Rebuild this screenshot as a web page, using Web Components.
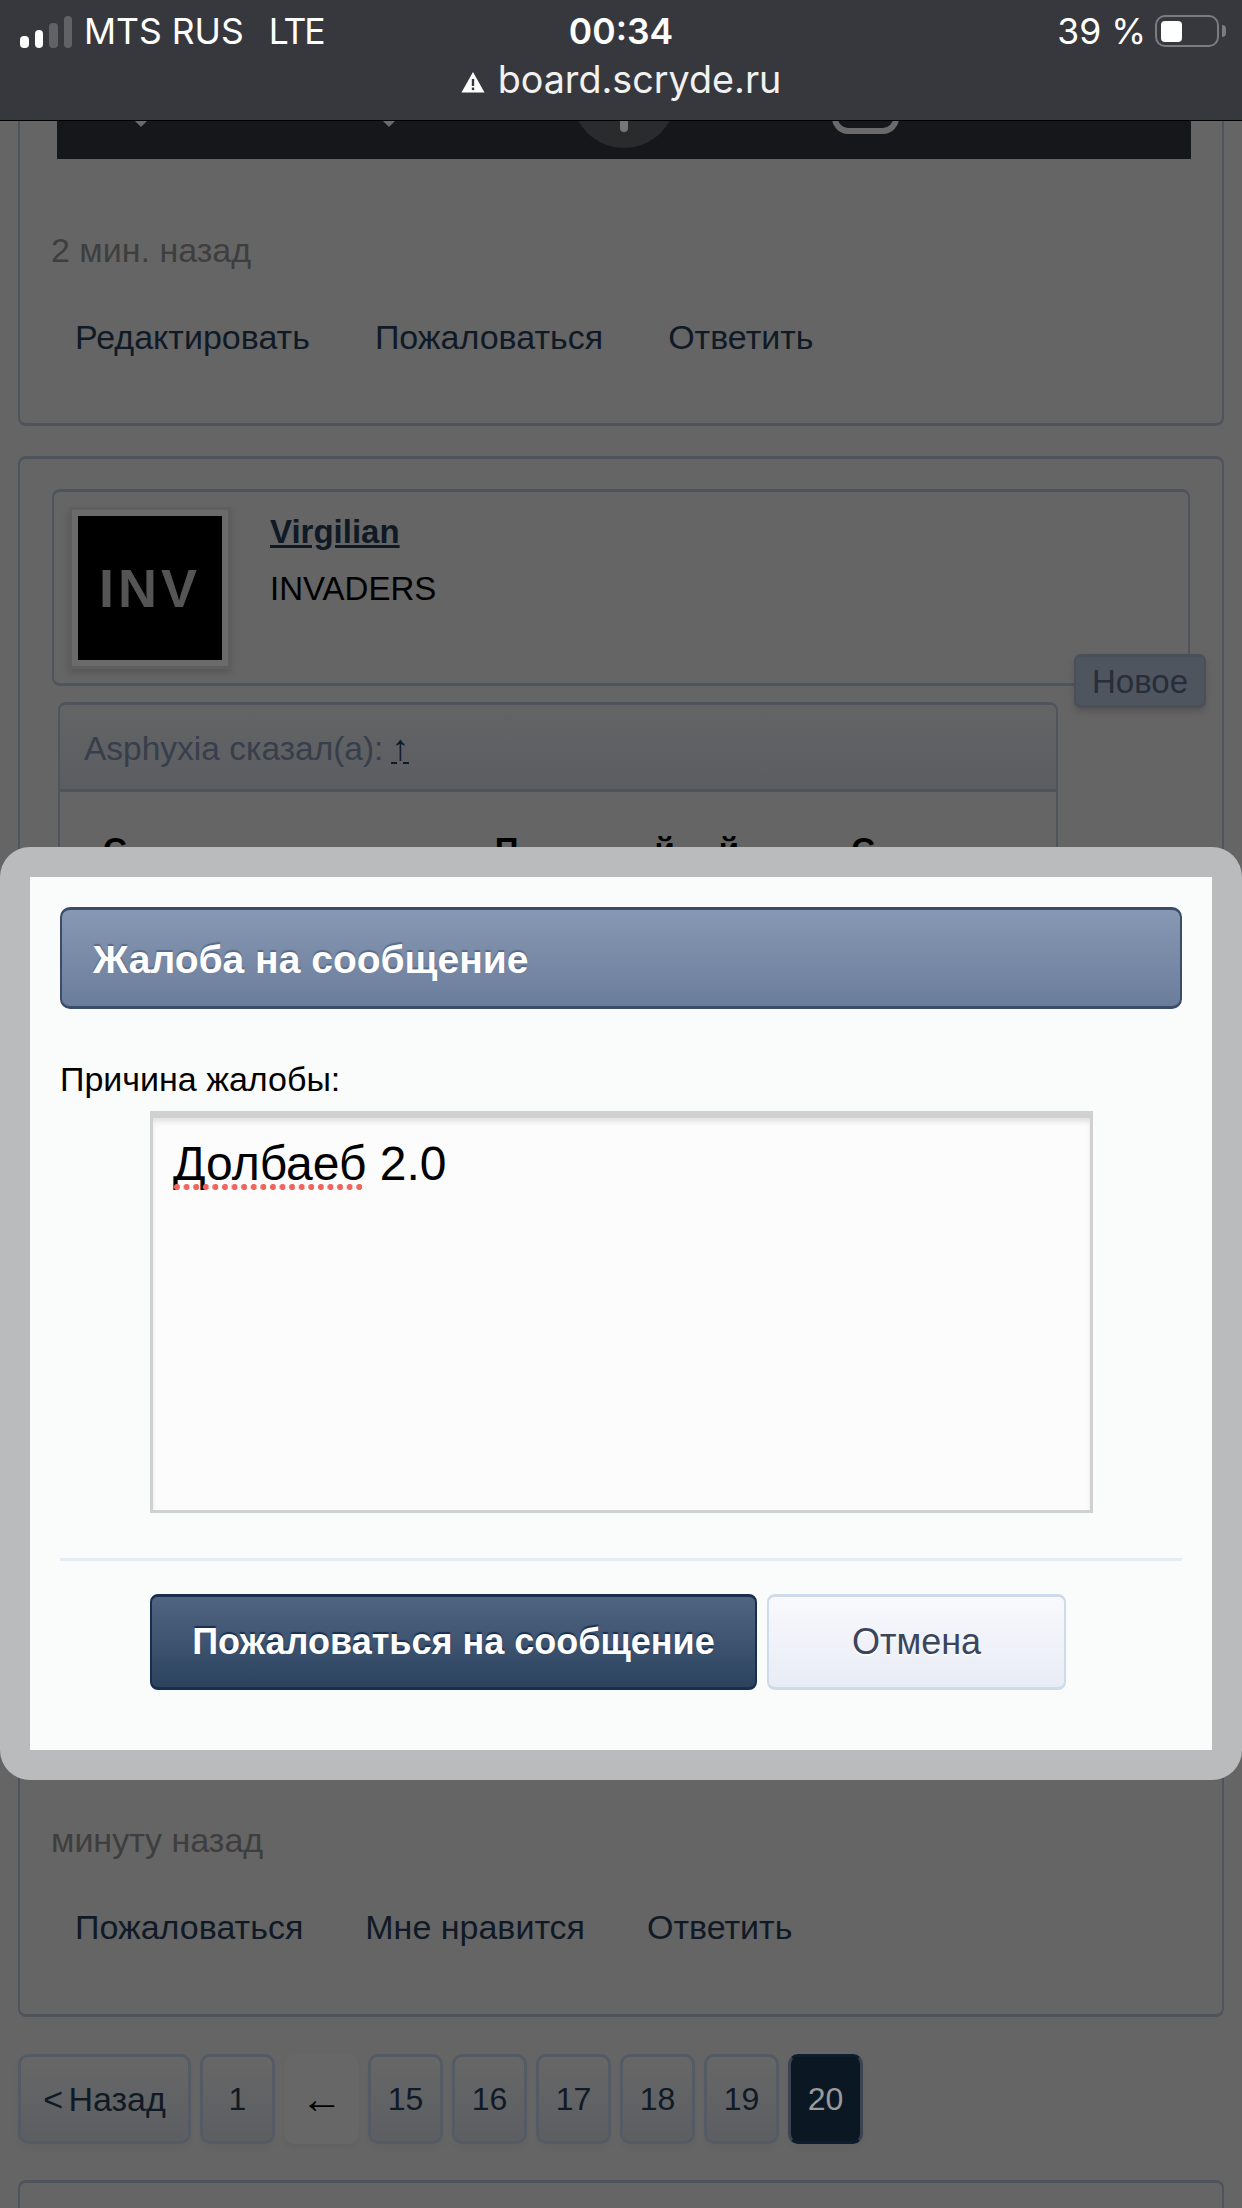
<!DOCTYPE html>
<html lang="ru">
<head>
<meta charset="utf-8">
<title>board.scryde.ru</title>
<style>
  html, body { margin: 0; padding: 0; }
  body {
    width: 1242px; height: 2208px; overflow: hidden; position: relative;
    background: #656565; color: #000;
    font: 32px "Liberation Sans", Arial, sans-serif;
    display: flex; flex-direction: column;
  }
  .bottom-line { height: 1px; background: #000; flex: none; }
</style>
</head>
<body>
  <status-bar carrier="MTS RUS" net="LTE" time="00:34" battery="39 %" url="board.scryde.ru"></status-bar>

  <forum-post cut>
    <video-strip></video-strip>
    <post-footer time="2 мин. назад" style="--link-gap:65px">
      <post-link>Редактировать</post-link>
      <post-link>Пожаловаться</post-link>
      <post-link>Ответить</post-link>
    </post-footer>
  </forum-post>

  <forum-post style="margin-top:30px">
    <user-card name="Virgilian" group="INVADERS"></user-card>
    <post-badge>Новое</post-badge>
    <post-quote author="Asphyxia сказал(а):"></post-quote>
    <post-footer time="минуту назад" style="margin-top:120px;--link-gap:62px">
      <post-link>Пожаловаться</post-link>
      <post-link>Мне нравится</post-link>
      <post-link>Ответить</post-link>
    </post-footer>
  </forum-post>

  <page-nav>
    <page-btn wide>&lt; Назад</page-btn>
    <page-btn>1</page-btn>
    <page-btn gap>←</page-btn>
    <page-btn>15</page-btn>
    <page-btn>16</page-btn>
    <page-btn>17</page-btn>
    <page-btn>18</page-btn>
    <page-btn>19</page-btn>
    <page-btn active>20</page-btn>
  </page-nav>

  <forum-post stub></forum-post>
  <div class="bottom-line"></div>

  <report-dialog title-text="Жалоба на сообщение" label="Причина жалобы:">
    <spell-word>Долбаеб</spell-word> 2.0
  </report-dialog>

<script>
// barra de estado + url
class StatusBar extends HTMLElement {
  constructor() {
    super();
    this.attachShadow({ mode: "open" });
  }
  connectedCallback() {
    const a = n => this.getAttribute(n);
    this.shadowRoot.innerHTML = `
      <style>
        :host { display: block; flex: none; height: 120px; border-bottom: 1px solid #000; background: #36383d;
                color: #fff; font-family: Inter, "Liberation Sans", sans-serif; position: relative; z-index: 2; }
        .top { height: 62px; display: grid; grid-template-columns: 1fr auto 1fr; align-items: center; font-size: 35.5px; }
        .left { display: flex; align-items: center; padding-left: 20px; }
        .bars { display: flex; align-items: flex-end; gap: 6px; height: 32px; margin-top: 2px; margin-right: 12px; }
        .bars i { width: 8.5px; border-radius: 4px; background: #fff; display: block; }
        .bars i.off { background: #606266; }
        .net { margin-left: 25px; letter-spacing: -2px; }
        .clock { font-weight: 600; }
        .right { display: flex; align-items: center; justify-content: flex-end; padding-right: 23px; }
        .batt { width: 53px; height: 21px; border: 2.5px solid #7b7c80; border-radius: 10px; margin-left: 9px; padding: 3.5px; position: relative; }
        .batt b { display: block; width: 21px; height: 21px; background: #fff; border-radius: 4px; }
        .batt::after { content: ""; position: absolute; right: -9px; top: 8px; width: 4px; height: 12px; background: #7b7c80; border-radius: 0 4px 4px 0; }
        .url { display: flex; justify-content: center; align-items: center; font-size: 37.7px; color: #f1f1f2; margin-top: -6px; height: 46px; }
        .url svg { margin-right: 13px; margin-top: 6px; }
      </style>
      <div class="top">
        <div class="left">
          <div class="bars"><i style="height:12px"></i><i style="height:18px"></i><i class="off" style="height:25px"></i><i class="off" style="height:32px"></i></div>
          <span>${a("carrier")}</span><span class="net">${a("net")}</span>
        </div>
        <div class="clock">${a("time")}</div>
        <div class="right"><span>${a("battery")}</span><div class="batt"><b></b></div></div>
      </div>
      <div class="url">
        <svg width="24" height="22" viewBox="0 0 24 22"><path d="M12 1 L23.5 21.5 H0.5 Z" fill="#fff"/><rect x="10.8" y="8" width="2.4" height="7" fill="#36383d"/><rect x="10.8" y="16.5" width="2.4" height="2.6" fill="#36383d"/></svg>
        <span>${a("url")}</span>
      </div>`;
  }
}

// tarjeta de un mensaje
class ForumPost extends HTMLElement {
  constructor() {
    super();
    this.attachShadow({ mode: "open" });
    this.shadowRoot.innerHTML = `
      <style>
        :host { display: block; flex: none; margin: 0 18px; box-sizing: border-box; position: relative;
                border: 2px solid #4f545c; border-top-width: 3px; border-bottom-width: 3px; border-radius: 8px; padding: 30px 0 67px; }
        :host([cut]) { border-top: 0; border-radius: 0 0 8px 8px; padding: 0 0 66px; }
        :host([stub]) { margin-top: 36px; height: 29px; padding: 0; border-bottom: 0; border-radius: 8px 8px 0 0; }
      </style>
      <slot></slot>`;
  }
}

// lo que queda visible del video del mensaje anterior
class VideoStrip extends HTMLElement {
  constructor() {
    super();
    this.attachShadow({ mode: "open" });
    this.shadowRoot.innerHTML = `
      <style>
        :host { display: block; height: 38px; margin: 0 31px 0 37px; background: #15171a; overflow: hidden; }
        svg { display: block; }
      </style>
      <svg width="1134" height="38" viewBox="0 0 1134 38">
        <path d="M78 0 H90 L84 6 Z" fill="#6a6a6a"/>
        <path d="M326 0 H338 L332 6 Z" fill="#6a6a6a"/>
        <circle cx="567" cy="-25" r="52" fill="#2a2b2d"/>
        <rect x="563" y="-20" width="8" height="31" rx="4" fill="#777"/>
        <rect x="778" y="-40" width="61" height="50" rx="13" fill="none" stroke="#6a6a6a" stroke-width="6"/>
      </svg>`;
  }
}

class PostFooter extends HTMLElement {
  constructor() {
    super();
    this.attachShadow({ mode: "open" });
  }
  connectedCallback() {
    this.shadowRoot.innerHTML = `
      <style>
        :host { display: block; margin-top: 71px; padding-left: 31px; }
        .time { height: 40px; line-height: 40px; color: #3e3e3e; font-size: 34px; }
        .links { display: flex; gap: var(--link-gap, 64px); margin: 47px 0 0 24px; }
      </style>
      <div class="time">${this.getAttribute("time")}</div>
      <div class="links"><slot></slot></div>`;
  }
}

class PostLink extends HTMLElement {
  constructor() {
    super();
    this.attachShadow({ mode: "open" });
    this.shadowRoot.innerHTML = `
      <style>
        :host { display: block; height: 40px; line-height: 40px; color: #101a26; font-size: 34px; white-space: nowrap; }
      </style>
      <slot></slot>`;
  }
}

class UserCard extends HTMLElement {
  constructor() {
    super();
    this.attachShadow({ mode: "open" });
  }
  connectedCallback() {
    this.shadowRoot.innerHTML = `
      <style>
        :host { display: flex; height: 197px; box-sizing: border-box; margin: 0 32px; padding: 15px 0 0 15px;
                border: 2px solid #4f545c; border-top-width: 3px; border-bottom-width: 3px; border-radius: 8px; }
        .frame { width: 162px; height: 162px; box-sizing: border-box; border: 3px solid #5e5e5e; background: #6b6b6b; padding: 6px;
                 box-shadow: 0 4px 7px rgba(0,0,0,.14); flex: none; }
        .pic { width: 144px; height: 144px; background: #000; display: flex; align-items: center; justify-content: center; }
        .logo { color: #555; font-size: 54px; letter-spacing: 4px; line-height: 1; filter: blur(.6px); font-weight: 700; }
        .info { margin-left: 39px; padding-top: 5px; }
        .name { color: #101a26; font-weight: 700; text-decoration: underline; height: 40px; line-height: 40px; font-size: 33px; }
        .group { margin-top: 17px; height: 40px; line-height: 40px; color: #000; font-size: 33px; }
      </style>
      <div class="frame"><div class="pic"><span class="logo">INV</span></div></div>
      <div class="info">
        <div class="name">${this.getAttribute("name")}</div>
        <div class="group">${this.getAttribute("group")}</div>
      </div>`;
  }
}

class PostBadge extends HTMLElement {
  constructor() {
    super();
    this.attachShadow({ mode: "open" });
    this.shadowRoot.innerHTML = `
      <style>
        :host { position: absolute; left: 1054px; top: 195px; width: 132px; height: 54px; box-sizing: border-box; padding-top: 2px;
                display: flex; align-items: center; justify-content: center;
                background: #4f555e; border: 2px solid #4a5058; border-top-width: 3px; border-bottom-width: 3px; border-radius: 7px;
                color: #272d39; font-size: 33px; box-shadow: 0 4px 6px rgba(0,0,0,.15); }
      </style>
      <slot></slot>`;
  }
}

class PostQuote extends HTMLElement {
  constructor() {
    super();
    this.attachShadow({ mode: "open" });
  }
  connectedCallback() {
    this.shadowRoot.innerHTML = `
      <style>
        :host { display: block; box-sizing: border-box; height: 998px; margin: 16px 164px 0 38px;
                border: 2px solid #4f545c; border-top-width: 3px; border-radius: 8px 8px 0 0; border-bottom-width: 3px; }
        .head { height: 87px; box-sizing: border-box; padding: 3px 24px 0; display: flex; align-items: center; gap: 8px;
                background: linear-gradient(#636465, #5b5d61); border-bottom: 3px solid #4f545c; border-radius: 6px 6px 0 0;
                color: #373e4c; font-size: 33.5px; }
        .up { color: #101a26; border-bottom: 2px dashed #101a26; line-height: 28px; font-size: 36px; }
        .body { padding: 38px 0 0 43px; font-weight: 700; font-size: 33px; line-height: 40px; white-space: pre; }
      </style>
      <div class="head"><span>${this.getAttribute("author")}</span><span class="up">↑</span></div>
      <div class="body"><span>С</span><span style="margin-left:368px">П</span><span style="margin-left:136px">й</span><span style="margin-left:44px">й</span><span style="margin-left:112px">С</span></div>`;
  }
}

class PageNav extends HTMLElement {
  constructor() {
    super();
    this.attachShadow({ mode: "open" });
    this.shadowRoot.innerHTML = `
      <style>
        :host { display: flex; flex: none; gap: 9px; margin: 37px 18px 0; height: 90px; }
      </style>
      <slot></slot>`;
  }
}

class PageBtn extends HTMLElement {
  constructor() {
    super();
    this.attachShadow({ mode: "open" });
    this.shadowRoot.innerHTML = `
      <style>
        :host { display: flex; align-items: center; justify-content: center; box-sizing: border-box; width: 75px; height: 90px;
                border: 3px solid #555b64; border-radius: 10px; background: linear-gradient(#676767, #5c5e62);
                color: #101a26; font-size: 32px; white-space: nowrap; box-shadow: 0 4px 6px rgba(0,0,0,.03); }
        :host([wide]) { width: 173px; font-size: 34px; word-spacing: -4px; }
        :host([gap]) { border-color: #676767; background: #676767; color: #000; font-size: 42px; box-shadow: 0 3px 5px rgba(0,0,0,.04); }
        :host([active]) { background: #0b1824; border-color: #3a434f; border-top-color: #0e1c2f; border-bottom-color: #0e1c2f; color: #9a9a9a; }
      </style>
      <slot></slot>`;
  }
}

// palabra con el subrayado rojo del corrector
class SpellWord extends HTMLElement {
  constructor() {
    super();
    this.attachShadow({ mode: "open" });
    this.shadowRoot.innerHTML = `
      <style>
        :host { display: inline-block; position: relative; }
        :host::after { content: ""; position: absolute; left: 1px; right: 0; bottom: 2px; height: 6px;
                       background: radial-gradient(circle at 3px 3px, #f0665f 2.8px, transparent 3.2px) 0 0 / 9.6px 6px repeat-x; }
      </style>
      <slot></slot>`;
  }
}

class ReportDialog extends HTMLElement {
  constructor() {
    super();
    this.attachShadow({ mode: "open" });
  }
  connectedCallback() {
    this.shadowRoot.innerHTML = `
      <style>
        :host { position: absolute; left: 0; top: 847px; width: 1242px; height: 933px; box-sizing: border-box;
                padding: 30px; background: #babbbd; border-radius: 30px; z-index: 3; }
        .inner { height: 100%; box-sizing: border-box; background: #fafcfb; padding: 30px; display: flex; flex-direction: column; }
        .title { flex: none; height: 102px; box-sizing: border-box; padding: 3px 0 0 31px; display: flex; align-items: center;
                 border: 2px solid #3a4c68; border-top-width: 3px; border-bottom-width: 3px; border-radius: 10px;
                 background: linear-gradient(#8798b3, #6a7d9b); color: #fff; font-weight: 700; font-size: 39px;
                 text-shadow: 0 -2px 1px rgba(60,76,104,.55); }
        .label { margin-top: 50px; height: 52px; line-height: 40px; font-size: 34px; }
        .field { align-self: flex-start; margin: 0 0 0 90px; width: 943px; height: 402px; box-sizing: border-box;
                 border: 3px solid #d0d0d0; border-top-width: 7px; background: #fcfcfc; padding: 18px 20px 0 20px;
                 font-size: 48px; line-height: 56px; box-shadow: inset 0 5px 6px -2px #dcdcdc; }
        .rule { height: 3px; background: #e6ebf4; margin-top: 45px; flex: none; }
        .actions { display: flex; gap: 10px; margin: 33px 0 0 90px; }
        .btn { height: 96px; box-sizing: border-box; display: flex; align-items: center; justify-content: center; border-radius: 8px;
               border: 2px solid; border-top-width: 3px; border-bottom-width: 3px; font-size: 36px; white-space: nowrap; }
        .send { width: 607px; background: linear-gradient(#516582, #2b435f); border-color: #1a2f4d; color: #fff; font-weight: 700;
                text-shadow: 0 -2px 1px #1a2f4d; }
        .cancel { width: 299px; background: linear-gradient(#f9f9fd, #e8ecf5); border-color: #cedbea; color: #3b455b;
                  text-shadow: 0 2px 0 #fff; }
      </style>
      <div class="inner">
        <div class="title">${this.getAttribute("title-text")}</div>
        <div class="label">${this.getAttribute("label")}</div>
        <div class="field"><slot></slot></div>
        <div class="rule"></div>
        <div class="actions">
          <div class="btn send">Пожаловаться на сообщение</div>
          <div class="btn cancel">Отмена</div>
        </div>
      </div>`;
  }
}

customElements.define("status-bar", StatusBar);
customElements.define("forum-post", ForumPost);
customElements.define("video-strip", VideoStrip);
customElements.define("post-footer", PostFooter);
customElements.define("post-link", PostLink);
customElements.define("user-card", UserCard);
customElements.define("post-badge", PostBadge);
customElements.define("post-quote", PostQuote);
customElements.define("page-nav", PageNav);
customElements.define("page-btn", PageBtn);
customElements.define("spell-word", SpellWord);
customElements.define("report-dialog", ReportDialog);
</script>
</body>
</html>
